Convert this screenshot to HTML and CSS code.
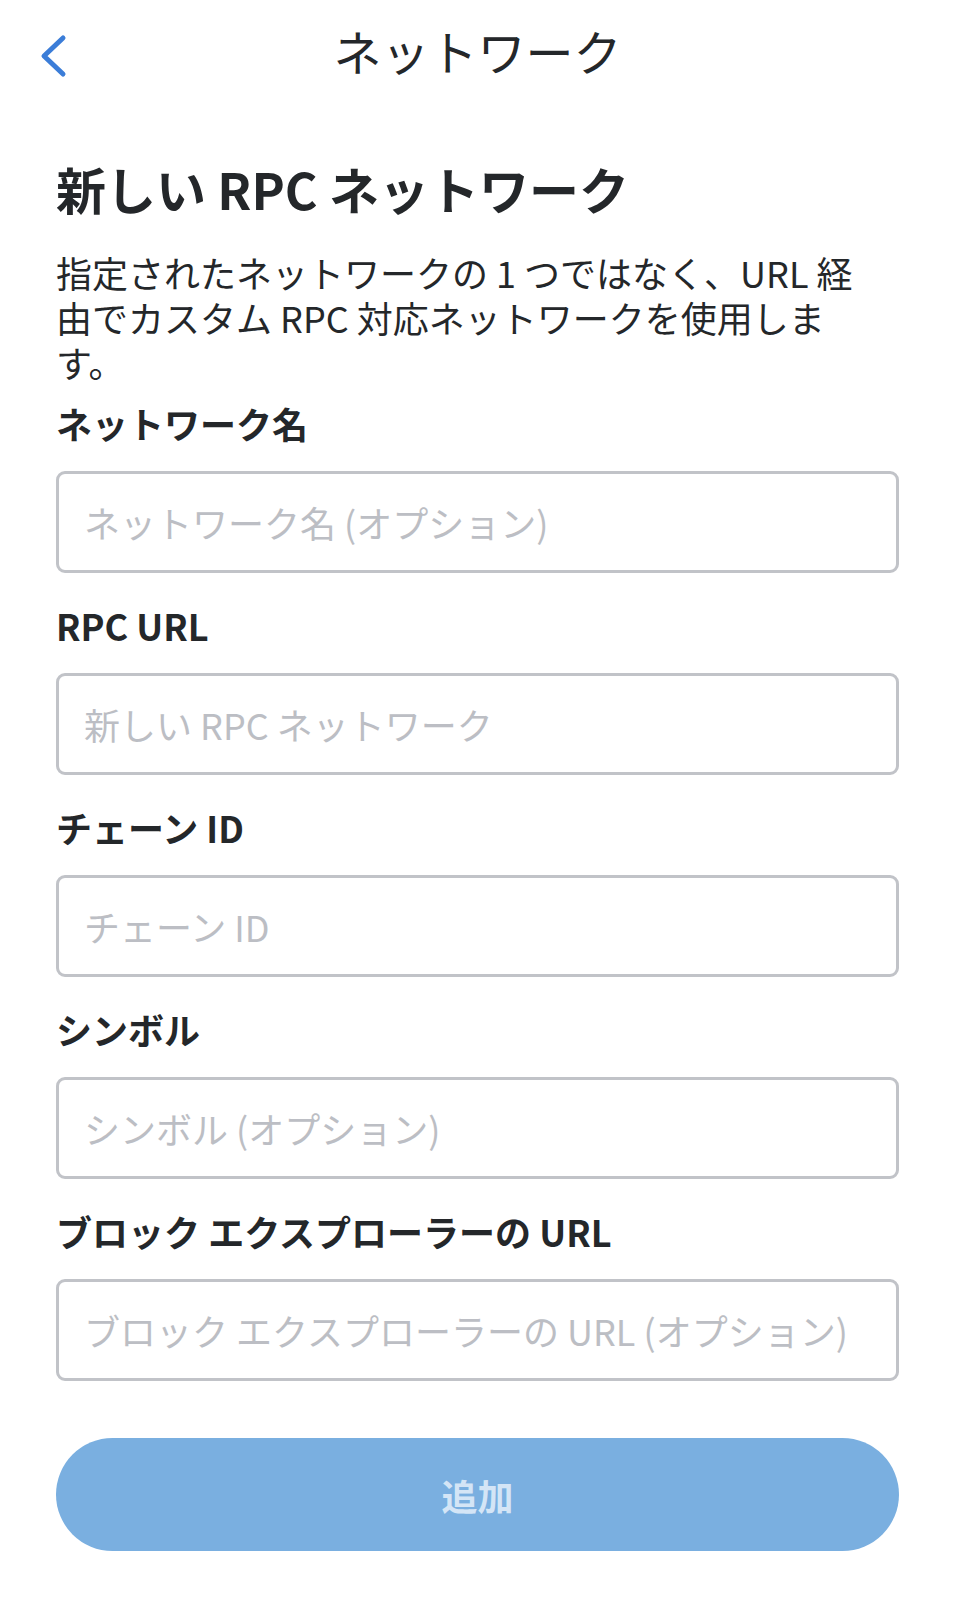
FILE: index.html
```html
<!DOCTYPE html>
<html lang="ja">
<head>
    <meta charset="UTF-8">
    <meta name="viewport" content="width=device-width, initial-scale=1.0">
    <title>ネットワーク</title>
    <link rel="stylesheet" href="styles.css">
</head>
<body>
    <header class="top-bar">
        <a class="back-link" href="#" aria-label="戻る">
            <svg width="30" height="48" viewBox="0 0 30 48">
                <path d="M25 6 L6 24 L25 42" fill="none" stroke="#3b7dd8" stroke-width="5" stroke-linecap="round" stroke-linejoin="round"/>
            </svg>
        </a>
        <h1 class="top-title">ネットワーク</h1>
        <span></span>
    </header>

    <main class="form-page">
        <h2 class="form-heading">新しい RPC ネットワーク</h2>
        <p class="form-desc">指定されたネットワークの 1 つではなく、URL 経由でカスタム RPC 対応ネットワークを使用します。</p>

        <div class="field">
            <label class="field-label" for="net-name">ネットワーク名</label>
            <input class="field-input" id="net-name" type="text" placeholder="ネットワーク名 (オプション)">
        </div>

        <div class="field">
            <label class="field-label" for="rpc-url">RPC URL</label>
            <input class="field-input" id="rpc-url" type="text" placeholder="新しい RPC ネットワーク">
        </div>

        <div class="field">
            <label class="field-label" for="chain-id">チェーン ID</label>
            <input class="field-input" id="chain-id" type="text" placeholder="チェーン ID">
        </div>

        <div class="field">
            <label class="field-label" for="symbol">シンボル</label>
            <input class="field-input" id="symbol" type="text" placeholder="シンボル (オプション)">
        </div>

        <div class="field">
            <label class="field-label" for="explorer">ブロック エクスプローラーの URL</label>
            <input class="field-input" id="explorer" type="text" placeholder="ブロック エクスプローラーの URL (オプション)">
        </div>

        <button class="add-button" disabled>追加</button>
    </main>
</body>
</html>
```

FILE: styles.css
```css
body {
    margin: 0;
    background: #ffffff;
    font-family: "Noto Sans CJK JP", "Noto Sans", sans-serif;
    color: #24272a;
}

.top-bar {
    display: grid;
    grid-template-columns: 1fr auto 1fr;
    align-items: center;
    height: 102px;
}

.back-link {
    display: flex;
    padding-left: 38px;
    margin-top: 10px;
}

.top-title {
    margin: 0;
    font-size: 48px;
    font-weight: 400;
    line-height: 1.2;
}

.form-page {
    padding: 0 56px;
}

.form-heading {
    margin: 56px 0 0;
    font-size: 50px;
    font-weight: 700;
    line-height: 60px;
}

.form-desc {
    margin: 32px 0 0;
    max-width: 820px;
    font-size: 36px;
    line-height: 45px;
}

.field {
    margin-top: 16px;
}

.field + .field {
    margin-top: 30px;
}

.field-label {
    display: block;
    margin-bottom: 26px;
    font-size: 36px;
    font-weight: 700;
    line-height: 44px;
}

.field-input {
    display: block;
    box-sizing: border-box;
    width: 100%;
    height: 102px;
    padding: 0 25px;
    border: 3px solid #c1c3c8;
    border-radius: 9px;
    font-family: inherit;
    font-size: 36px;
    color: #24272a;
    background: #ffffff;
}

.field-input::placeholder {
    color: #bcbec4;
}

.add-button {
    display: block;
    width: 100%;
    height: 113px;
    margin-top: 57px;
    border: none;
    border-radius: 57px;
    background: #7aafe0;
    color: #d4e5f6;
    font-family: inherit;
    font-size: 36px;
    font-weight: 700;
}
```
